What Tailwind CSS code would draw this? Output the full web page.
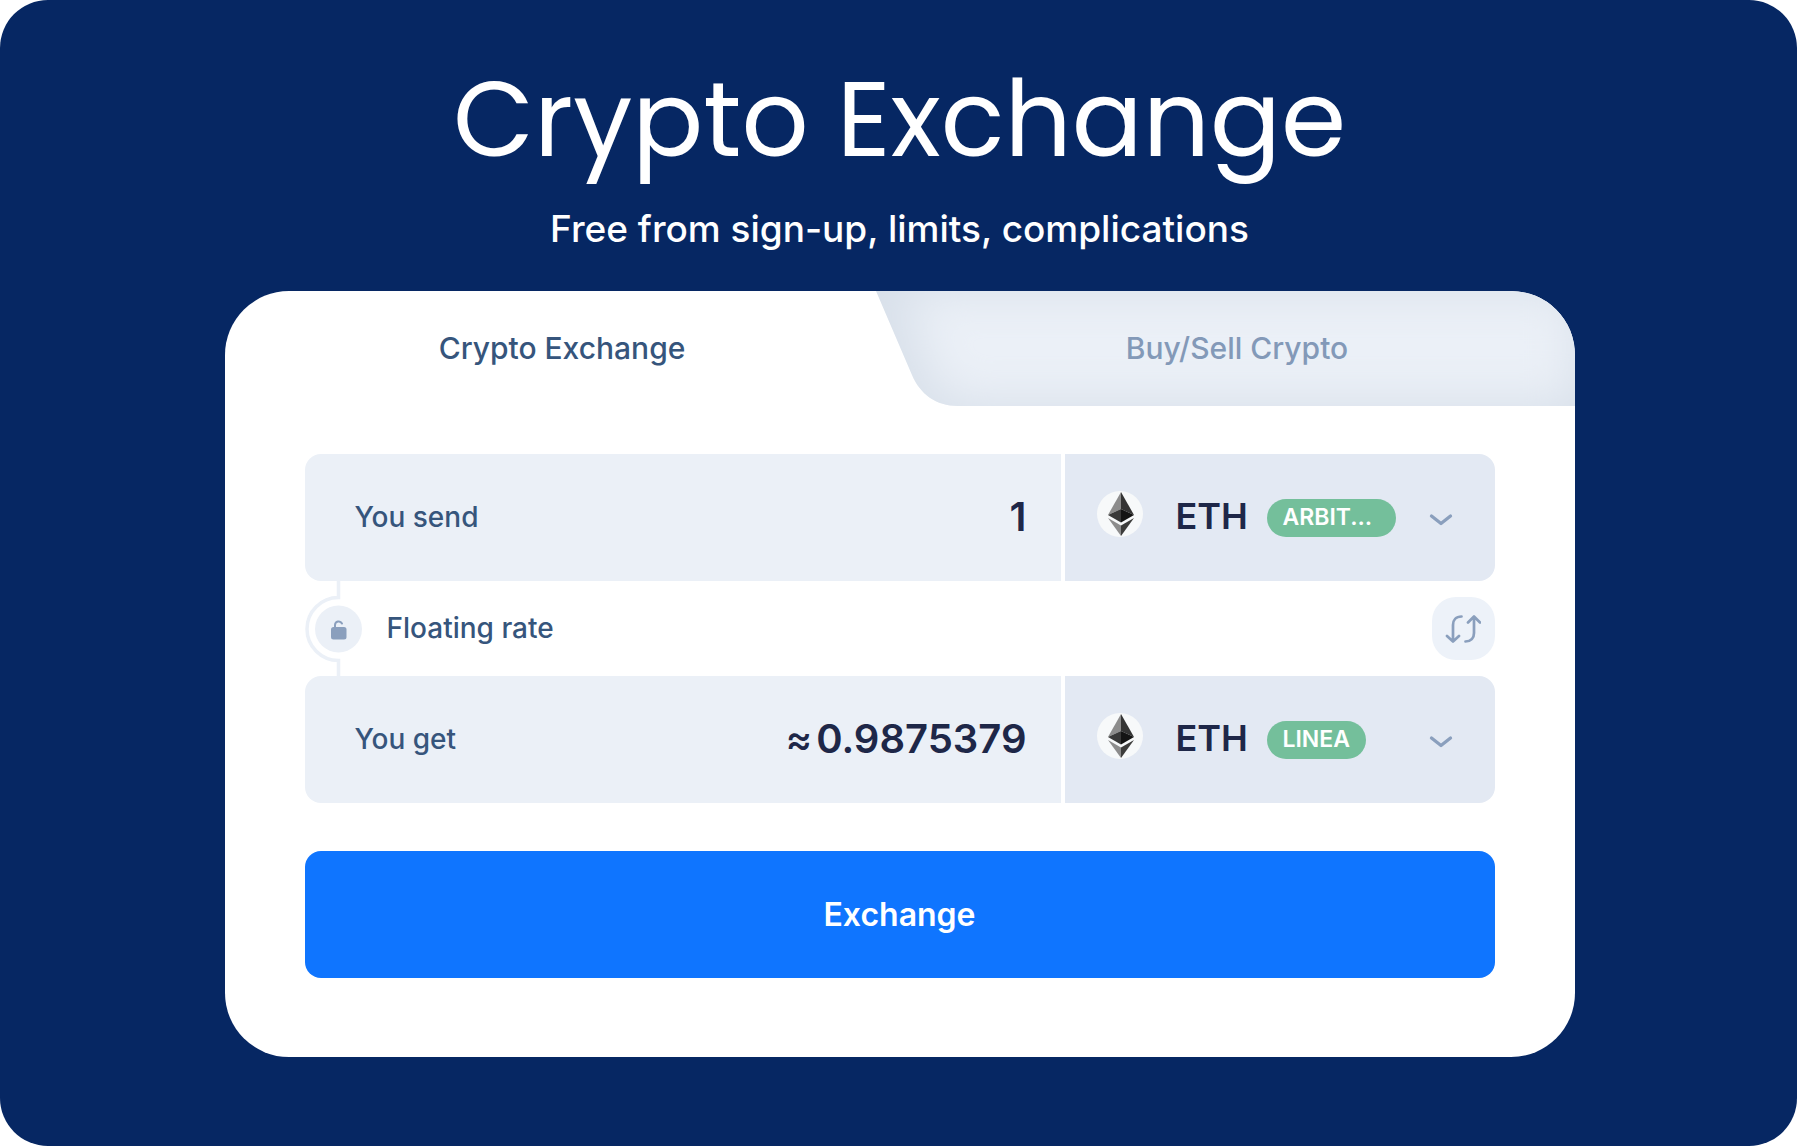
<!DOCTYPE html>
<html lang="en">

<head>
    <meta charset="UTF-8">
    <meta name="viewport" content="width=device-width, initial-scale=1.0">
    <title>Crypto Exchange</title>
    <script src="https://cdn.jsdelivr.net/npm/@tailwindcss/browser@4"></script>
</head>

<body class="bg-white font-[Inter,sans-serif]">
<!-- shared icons -->
<svg class="hidden">
    <symbol id="eth" viewBox="0 0 46 46">
        <circle cx="23" cy="23" r="23" fill="#f7f9fa"/>
        <path d="M24 1 11 24 24 18z" fill="#8c8c8c"/>
        <path d="M24 1 37 24 24 18z" fill="#343434"/>
        <path d="M11 24 24 18V31.500z" fill="#393939"/>
        <path d="M37 24 24 18V31.500z" fill="#141414"/>
        <path d="M11 27 24 34.500V45z" fill="#8c8c8c"/>
        <path d="M37 27 24 34.500V45z" fill="#3c3c3b"/>
    </symbol>
    <symbol id="chevron" viewBox="0 0 24 14">
        <path d="M2.500 3 12 10.500 21.500 3" fill="none" stroke="#8a9fbd" stroke-width="3.300" stroke-linecap="round" stroke-linejoin="round"/>
    </symbol>
</svg>
<main class="min-h-screen bg-[#062763] rounded-[48px] pl-[26px] pr-6 pt-[60px] pb-[88px] flex flex-col items-center">
    <h1 class="text-white text-[105px] leading-[120px] text-center font-[Poppins,Inter,sans-serif]">Crypto Exchange</h1>
    <p class="text-white text-[37px] leading-[48px] font-medium text-center mt-[25px]">Free from sign-up, limits, complications</p>

    <section class="w-full max-w-[1350px] mt-[38px] bg-white rounded-[64px] overflow-hidden">
        <div class="grid grid-cols-2 h-[115px] text-[30px] font-medium">
            <button type="button" class="relative z-10 text-[#36557c]">Crypto Exchange</button>
            <button type="button" class="relative text-[#8399b8]">
                <svg class="absolute top-0 -left-6 h-full w-[calc(100%+24px)]" viewBox="0 0 699 115" preserveAspectRatio="none">
                    <defs>
                        <clipPath id="tab"><path d="M0 0H633Q699 2 699 68V115H82C60 115 44 103 36 84z"/></clipPath>
                        <filter id="soft" x="-20%" y="-60%" width="140%" height="220%"><feGaussianBlur stdDeviation="24"/></filter>
                    </defs>
                    <g clip-path="url(#tab)">
                        <rect width="699" height="115" fill="#d8e0ea"/>
                        <path d="M26 0H700V112H84Q62 108 54 84z" fill="#ebf0f7" filter="url(#soft)"/>
                    </g>
                </svg>
                <span class="relative">Buy/Sell Crypto</span>
            </button>
        </div>

        <form class="px-20 pt-12 pb-[79px]">
            <div class="flex gap-1 h-[127px] rounded-2xl overflow-hidden">
                <div class="flex-1 min-w-0 flex items-center bg-[#ebf0f7] pl-[50px] pr-[34px] pb-0.5">
                    <label for="send" class="shrink-0 text-[28px] font-medium text-[#36557c]">You send</label>
                    <input id="send" type="text" value="1" class="flex-1 min-w-0 text-right text-[40px] font-semibold text-[#1e2748] outline-none">
                </div>
                <div class="w-[430px] flex items-center bg-[#e3e9f3] pl-8 pr-[42px]">
                    <svg class="size-[46px] mb-2 shrink-0"><use href="#eth"/></svg>
                    <select aria-label="Currency you send" class="appearance-none ml-[33px] mr-[18px] pb-1 text-[36px] font-semibold text-[#1e2748] outline-none">
                        <option>ETH</option>
                    </select>
                    <span class="w-[129px] h-[38px] pl-4 flex items-center rounded-full bg-[#74bf9b] text-white text-[23px] font-semibold">ARBIT...</span>
                    <svg class="w-6 h-3.5 mt-1 ml-auto"><use href="#chevron"/></svg>
                </div>
            </div>

            <div class="flex items-center h-[95px]">
                <svg class="w-[58px] h-full shrink-0" viewBox="0 0 58 95" fill="none">
                    <path d="M33.500 0V16.500A31.500 31.500 0 0 0 33.500 79.500V95" stroke="#ebf0f7" stroke-width="3.500"/>
                    <circle cx="33.500" cy="48" r="23.500" fill="#ebf0f7"/>
                    <rect x="26" y="46" width="15.500" height="12.500" rx="2.500" fill="#8a9fbd"/>
                    <path d="M30 47V44A3.700 3.700 0 0 1 37 42.500" stroke="#8a9fbd" stroke-width="2" stroke-linecap="round"/>
                </svg>
                <span class="ml-6 pb-0.5 text-[28px] font-medium text-[#36557c]">Floating rate</span>
                <button type="button" aria-label="Swap currencies" class="ml-auto size-[63px] rounded-3xl bg-[#edf2f9] flex items-center justify-center">
                    <svg class="w-9 h-7" viewBox="0 0 36 28" fill="none" stroke="#8a9fbd" stroke-width="2.700" stroke-linecap="round" stroke-linejoin="round">
                        <path d="M16.500 1.500C11 1.500 8 5 8 10V26M2 21 8 26.500 14 21"/>
                        <path d="M20.500 26.500C26 26.500 29 23 29 18V2M23 7.500 29 1.500 35 7.500"/>
                    </svg>
                </button>
            </div>

            <div class="flex gap-1 h-[127px] rounded-2xl overflow-hidden">
                <div class="flex-1 min-w-0 flex items-center bg-[#ebf0f7] pl-[50px] pr-[34px] pb-0.5">
                    <label for="get" class="shrink-0 text-[28px] font-medium text-[#36557c]">You get</label>
                    <output id="get" class="ml-auto flex items-center gap-1 text-[40px] font-semibold text-[#1e2748]"><span class="font-medium">≈</span>0.9875379</output>
                </div>
                <div class="w-[430px] flex items-center bg-[#e3e9f3] pl-8 pr-[42px]">
                    <svg class="size-[46px] mb-2 shrink-0"><use href="#eth"/></svg>
                    <select aria-label="Currency you get" class="appearance-none ml-[33px] mr-[18px] pb-1 text-[36px] font-semibold text-[#1e2748] outline-none">
                        <option>ETH</option>
                    </select>
                    <span class="h-[38px] px-4 flex items-center rounded-full bg-[#74bf9b] text-white text-[23px] font-semibold">LINEA</span>
                    <svg class="w-6 h-3.5 mt-1 ml-auto"><use href="#chevron"/></svg>
                </div>
            </div>

            <button type="submit" class="w-full h-[127px] mt-12 rounded-2xl bg-[#0f75ff] text-white text-[32px] font-semibold">Exchange</button>
        </form>
    </section>
</main>
</body>

</html>
